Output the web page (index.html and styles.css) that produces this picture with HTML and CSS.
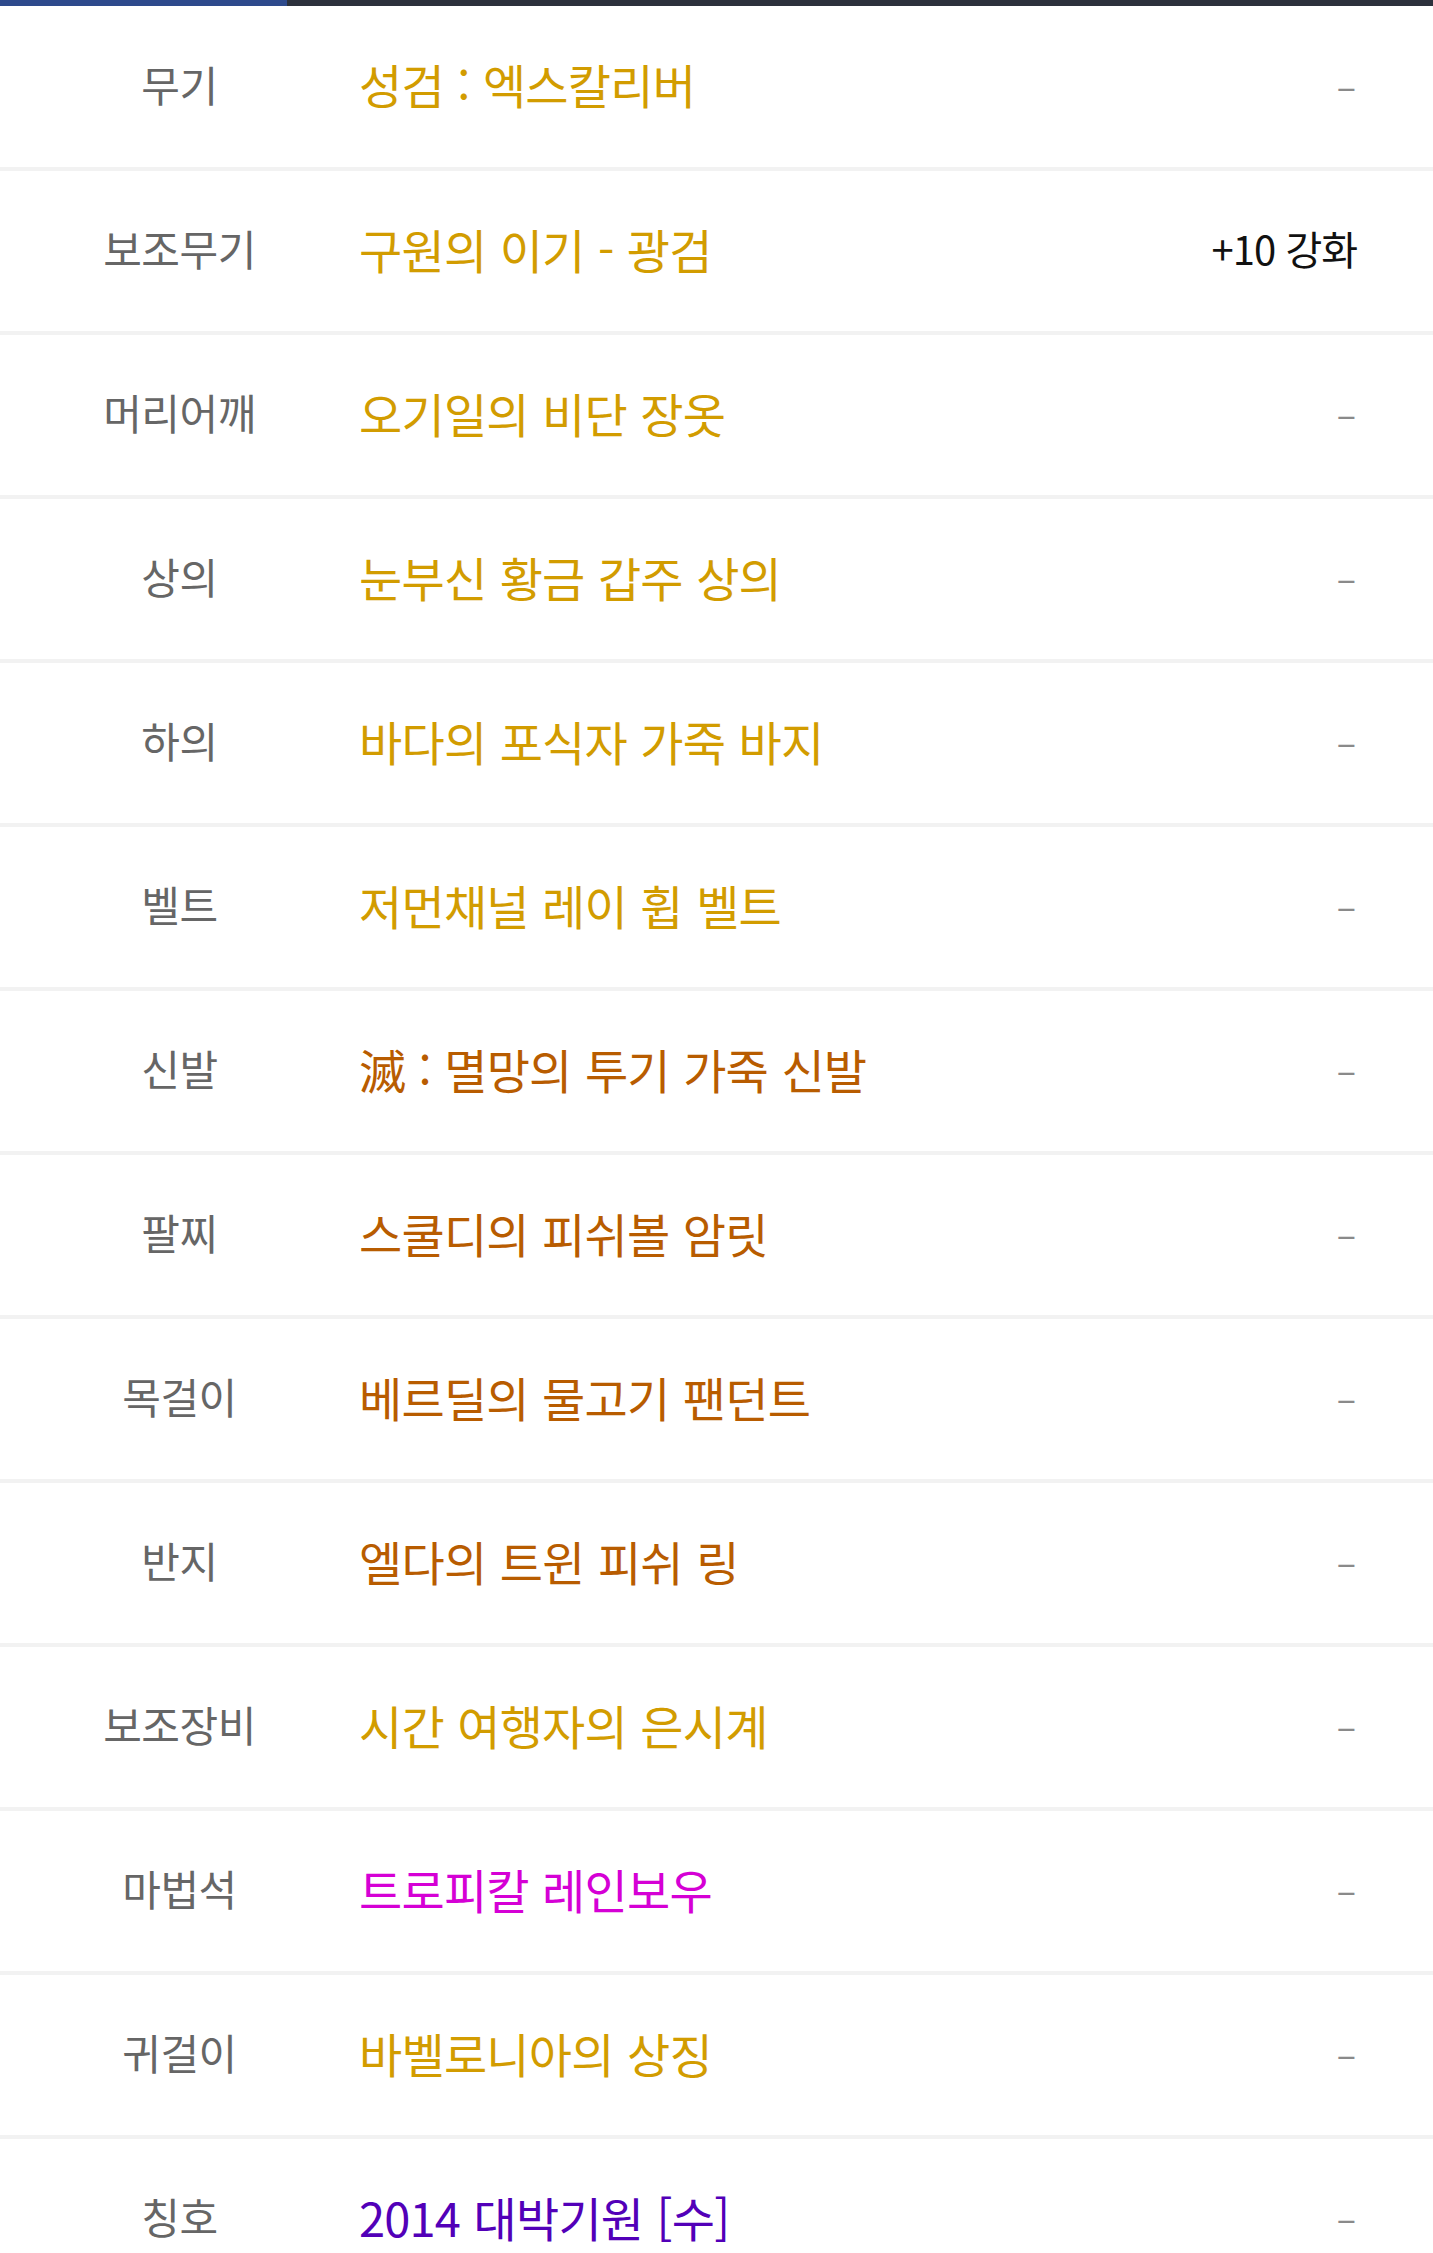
FILE: index.html
```html
<!DOCTYPE html>
<html lang="ko">
<head>
<meta charset="utf-8">
<title>장비</title>
<link rel="stylesheet" href="styles.css">
</head>
<body>
<div class="tabbar">
  <div class="tab tab-active"></div>
  <div class="tab"></div>
</div>
<ul class="equip-list">
  <li class="equip-row"><span class="slot">무기</span><span class="item grade-gold">성검 : 엑스칼리버</span><span class="extra none">–</span></li>
  <li class="equip-row"><span class="slot">보조무기</span><span class="item grade-gold">구원의 이기 - 광검</span><span class="extra">+10 강화</span></li>
  <li class="equip-row"><span class="slot">머리어깨</span><span class="item grade-gold">오기일의 비단 장옷</span><span class="extra none">–</span></li>
  <li class="equip-row"><span class="slot">상의</span><span class="item grade-gold">눈부신 황금 갑주 상의</span><span class="extra none">–</span></li>
  <li class="equip-row"><span class="slot">하의</span><span class="item grade-gold">바다의 포식자 가죽 바지</span><span class="extra none">–</span></li>
  <li class="equip-row"><span class="slot">벨트</span><span class="item grade-gold">저먼채널 레이 휩 벨트</span><span class="extra none">–</span></li>
  <li class="equip-row"><span class="slot">신발</span><span class="item grade-brown">滅 : 멸망의 투기 가죽 신발</span><span class="extra none">–</span></li>
  <li class="equip-row"><span class="slot">팔찌</span><span class="item grade-brown">스쿨디의 피쉬볼 암릿</span><span class="extra none">–</span></li>
  <li class="equip-row"><span class="slot">목걸이</span><span class="item grade-brown">베르딜의 물고기 팬던트</span><span class="extra none">–</span></li>
  <li class="equip-row"><span class="slot">반지</span><span class="item grade-brown">엘다의 트윈 피쉬 링</span><span class="extra none">–</span></li>
  <li class="equip-row"><span class="slot">보조장비</span><span class="item grade-gold">시간 여행자의 은시계</span><span class="extra none">–</span></li>
  <li class="equip-row"><span class="slot">마법석</span><span class="item grade-magenta">트로피칼 레인보우</span><span class="extra none">–</span></li>
  <li class="equip-row"><span class="slot">귀걸이</span><span class="item grade-gold">바벨로니아의 상징</span><span class="extra none">–</span></li>
  <li class="equip-row"><span class="slot">칭호</span><span class="item grade-purple">2014 대박기원 [수]</span><span class="extra none">–</span></li>
</ul>
</body>
</html>
```

FILE: styles.css
```css
html, body {
  margin: 0;
  padding: 0;
  background: #ffffff;
}

body {
  font-family: "Noto Sans CJK KR", "Noto Sans", sans-serif;
}

.tabbar {
  display: flex;
  height: 6px;
  background: #2c313c;
}

.tab {
  flex: 4;
}

.tab-active {
  flex: 1;
  background: #2e4a8c;
}

.equip-list {
  list-style: none;
  margin: 0;
  padding: 0;
}

.equip-row {
  display: grid;
  grid-template-columns: 359px 1fr auto;
  align-items: center;
  height: 160px;
  padding-right: 76px;
  border-bottom: 4px solid #f2f2f2;
}

.equip-row:first-child {
  height: 161px;
}

.slot {
  text-align: center;
  color: #666666;
  font-size: 42px;
  letter-spacing: -0.5px;
  line-height: 1;
  padding-bottom: 6px;
}

.item {
  font-size: 47px;
  letter-spacing: -0.8px;
  word-spacing: 1px;
  line-height: 1;
  white-space: nowrap;
  padding-bottom: 6px;
}

.extra {
  color: #111111;
  font-size: 40px;
  letter-spacing: -1px;
  line-height: 1;
  text-align: right;
  padding-bottom: 6px;
}

.extra.none {
  color: #8a8a8a;
  font-size: 36px;
  letter-spacing: 0;
  padding-right: 1px;
}

.grade-gold {
  color: #d29c00;
}

.grade-brown {
  color: #b85c00;
}

.grade-magenta {
  color: #d500d5;
}

.grade-purple {
  color: #5200b8;
}
```
